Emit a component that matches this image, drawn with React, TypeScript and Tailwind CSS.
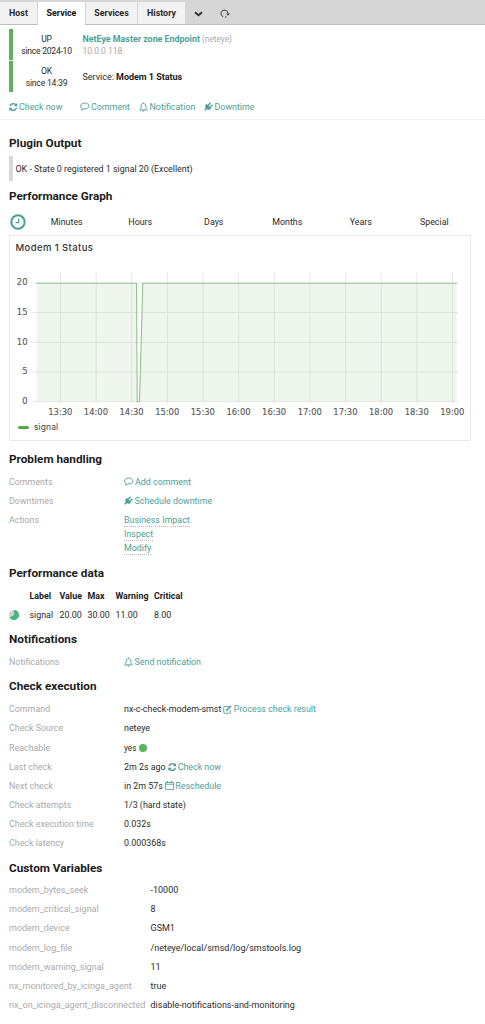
import type { ReactNode } from "react";

const Refresh = () => (
  <svg className="h-[8px] w-[8.5px] shrink-0" viewBox="0 0 1536 1536" fill="currentColor">
    <path d="M1511 928q0 5-1 7-64 268-268 434.5t-478 166.5q-146 0-282.5-55t-243.5-157l-129 129q-19 19-45 19t-45-19-19-45v-448q0-26 19-45t45-19h448q26 0 45 19t19 45-19 45l-137 137q71 66 161 102t187 36q134 0 250-65t186-179q11-17 53-117 8-23 30-23h192q13 0 22.5 9.5t9.5 22.5zm25-800v448q0 26-19 45t-45 19h-448q-26 0-45-19t-19-45 19-45l138-138q-148-137-349-137-134 0-250 65t-186 179q-11 17-53 117-8 23-30 23h-199q-13 0-22.5-9.5t-9.5-22.5v-7q65-268 270-434.5t480-166.5q146 0 284 55.5t245 156.5l130-129q19-19 45-19t45 19 19 45z" />
  </svg>
);

const Comment = () => (
  <svg className="h-[9px] w-[9.5px]" viewBox="0 0 19 18" fill="none" stroke="currentColor" strokeWidth="1.8" strokeLinejoin="round">
    <path d="M9.5 2C5 2 1.2 4.6 1.2 8c0 2 1.2 3.7 3.2 4.8C4.2 14 3.6 15 2.6 16c2.2-.2 4-1 5.2-2.2C14 14.3 17.8 11.6 17.8 8S14 2 9.5 2Z" />
  </svg>
);

const Bell = () => (
  <svg className="h-[10px] w-[9px]" viewBox="0 0 18 20" fill="none" stroke="currentColor" strokeWidth="1.8" strokeLinejoin="round">
    <path d="M9 1v2M9 3C6 3 4.4 5.2 4.4 8c0 4-1 6-3.2 7.8h15.6C14.6 14 13.6 12 13.6 8c0-2.8-1.6-5-4.6-5ZM7.3 16.3c0 2.8 3.4 2.8 3.4 0" />
  </svg>
);

const Plug = () => (
  <svg className="h-[9px] w-[9px]" viewBox="0 0 18 18" fill="currentColor">
    <path d="M5 3.5 14.5 13c-2.5 2.6-5.8 2.9-8.5 1.5L2.5 17.5.5 15.5l2.8-3.2C2 9.6 2.5 6.3 5 3.5Z" />
    <path d="m9 6 3.5-3.500M12.500 9.800l3.500-3.500" stroke="currentColor" strokeWidth="2.9" strokeLinecap="round" />
  </svg>
);

const Edit = () => (
  <svg className="h-[9px] w-[9px]" viewBox="0 0 18 18" fill="none" stroke="currentColor" strokeWidth="1.8">
    <path d="M12 3H3.500Q1.500 3 1.500 5v9.500q0 2 2 2H13q2 0 2-2V11" />
    <path d="m7.500 10.500 8.500-8.500" strokeWidth="3.4" />
    <path d="m5.500 12.700.7-3.500 2.700 2.700Z" fill="currentColor" stroke="none" />
  </svg>
);

const Calendar = () => (
  <svg className="h-[9px] w-[9px]" viewBox="0 0 18 18" fill="none" stroke="currentColor" strokeWidth="1.6">
    <path d="M1 3h16v14H1ZM1 6.500h16" />
    <path d="M5 0v4M13 0v4" strokeWidth="2.5" />
  </svg>
);

const Clock = () => (
  <svg className="h-4 w-4" viewBox="0 0 16 16" fill="none" stroke="currentColor">
    <circle cx="8" cy="8" r="6.7" strokeWidth="2" />
    <path d="M8.700 4.500v4.100H5.500" strokeWidth="1.2" />
  </svg>
);

const Link = ({ icon, children }: { icon: ReactNode; children: ReactNode }) => (
  <a className="inline-flex items-center gap-[1.5px] text-[#4a9f99]">
    {icon}
    <span>{children}</span>
  </a>
);

const Heading = ({ children }: { children: ReactNode }) => (
  <h2 className="flex h-[18px] items-center text-[11.75px] font-bold text-[#1c1c1c]">{children}</h2>
);

const Row = ({ label, children }: { label: string; children: ReactNode }) => (
  <div className="flex h-[19.1px] items-center">
    <div className="w-[115px] text-[#aaa]">{label}</div>
    <div className="flex items-center gap-[2px]">{children}</div>
  </div>
);

const hours = ["13:30", "14:00", "14:30", "15:00", "15:30", "16:00", "16:30", "17:00", "17:30", "18:00", "18:30", "19:00"];

const variables = [
  ["modem_bytes_seek", "-10000"],
  ["modem_critical_signal", "8"],
  ["modem_device", "GSM1"],
  ["modem_log_file", "/neteye/local/smsd/log/smstools.log"],
  ["modem_warning_signal", "11"],
  ["nx_monitored_by_icinga_agent", "true"],
  ["nx_on_icinga_agent_disconnected", "disable-notifications-and-monitoring"],
];

const Chart = () => (
  <svg className="block h-[164px] w-[460px]" viewBox="10 256 460 164">
    <g stroke="#ebebec" strokeWidth="1">
      {[283, 312.5, 342.5, 372, 401.5].map((y) => (
        <path key={y} d={`M31 ${y}H458.5`} />
      ))}
      {hours.map((h, i) => (
        <path key={h} d={`M${60.5 + i * 35.64} 271.5V404`} />
      ))}
    </g>
    <path d="M36.500 283.300H136.500L137.200 401.500H139.500L142.800 283.300H456.800V401.500H36.500Z" fill="#56a64b" fillOpacity=".1" />
    <path d="M36.500 283.300H136.500L137.200 401.500H139.500L142.800 283.300H456.800" fill="none" stroke="#8fc588" strokeWidth="1.1" />
    <g fill="#5b5c60" stroke="#5b5c60" strokeWidth=".15" fontSize="8.4" fontFamily="DejaVu Sans, sans-serif">
      {[20, 15, 10, 5, 0].map((v, i) => (
        <text key={v} x="27.5" y={285.3 + i * 29.6} textAnchor="end">{v}</text>
      ))}
      {hours.map((h, i) => (
        <text key={h} x={60.3 + i * 35.64} y="414.5" textAnchor="middle">{h}</text>
      ))}
    </g>
  </svg>
);

const App = () => {
  return (
    <div className="h-[1024px] w-full overflow-hidden bg-white font-['Roboto',sans-serif] text-[8.9px] leading-[12px] whitespace-nowrap text-[#2b2b2b]">
      {/* tabs */}
      <nav className="flex h-[25px] items-stretch border-b border-[#bdbdbd] bg-[#d6d6d6] pt-[2px] font-bold">
        <div className="flex w-[37px] items-center justify-center bg-[#f2f2f2]">Host</div>
        <div className="ml-px -mb-px flex w-[47px] items-center justify-center bg-white pb-px text-[#111]">Service</div>
        <div className="ml-px flex w-[51px] items-center justify-center bg-[#f2f2f2]">Services</div>
        <div className="ml-px flex w-[47px] items-center justify-center bg-[#f2f2f2]">History</div>
        <svg className="mt-[9px] ml-[9px] h-[6px] w-[9px]" viewBox="0 0 9 6" fill="none" stroke="#333" strokeWidth="2">
          <path d="m1 1.200 3.500 3 3.500-3" />
        </svg>
        <svg className="mt-[7px] ml-[17px] h-[9px] w-[10px]" viewBox="0 0 10 9" fill="none" stroke="#444" strokeWidth="1">
          <path d="M3.300 7.800A3.500 3.500 0 1 1 8 4.500M5 8h1.500" />
          <path d="M6 4.500h4L8 6.800Z" fill="#444" stroke="none" />
        </svg>
      </nav>

      {/* host and service state */}
      <header className="h-[95px] border-b border-[#f0f0f0] pt-[4px] pl-[9px]">
        <div className="mb-px flex h-[31px]">
          <div className="w-[4px] bg-[#5cb35c]" />
          <div className="w-[67px] pt-[4px] text-center text-[8.6px] tracking-[-.25px]">UP<br />since 2024-10</div>
          <div className="pt-[4px] pl-[2.5px]">
            <span className="font-bold text-[#4a9f99]">NetEye Master zone Endpoint</span>
            <span className="text-[8.3px] text-[#aaa]"> (neteye)</span>
            <div className="text-[8.6px] tracking-[-.1px] text-[#aaa]">10.0.0.118</div>
          </div>
        </div>
        <div className="flex h-[31px]">
          <div className="w-[4px] bg-[#5cb35c]" />
          <div className="w-[67px] pt-[4px] text-center text-[8.6px] tracking-[-.2px]">OK<br />since 14:39</div>
          <div className="flex items-center pl-[2.5px] text-[9px] tracking-[-.02px] whitespace-pre">
            Service: <b className="text-[#1c1c1c]">Modem 1 Status</b>
          </div>
        </div>
        <div className="flex h-[26px] items-center pt-[3px]">
          <div className="flex w-[71px]"><Link icon={<Refresh />}>Check now</Link></div>
          <div className="flex w-[59px]"><Link icon={<Comment />}>Comment</Link></div>
          <div className="flex w-[65px]"><Link icon={<Bell />}>Notification</Link></div>
          <Link icon={<Plug />}>Downtime</Link>
        </div>
      </header>

      <main className="px-[9px] pt-[14px]">
        <Heading>Plugin Output</Heading>
        <div className="mt-[4px] flex h-[25px] items-center border-l-[4px] border-[#d8d8d8] pl-[2.5px]">
          OK - State 0 registered 1 signal 20 (Excellent)
        </div>
        <div className="pt-[6px]"><Heading>Performance Graph</Heading></div>

        <div className="mt-[6px] mb-[2px] flex h-[22px] items-center pl-[1px] text-[#4a9f99]">
          <Clock />
          <div className="ml-[4px] grid grid-cols-[repeat(6,73.5px)] text-center text-[#2b2b2b]">
            {["Minutes", "Hours", "Days", "Months", "Years", "Special"].map((t) => (
              <span key={t}>{t}</span>
            ))}
          </div>
        </div>

        <div className="h-[206px] w-[462px] border border-[#e9e9e9]">
          <div className="h-[20px] pt-[6px] pl-[5.5px] font-['Inter'] text-[9.5px] font-medium tracking-[.4px] text-[#333]">Modem 1 Status</div>
          <Chart />
          <div className="flex items-center pt-px pl-[8px] font-['Inter'] text-[8.5px] tracking-[.1px] text-[#444]">
            <div className="mr-[5px] h-[3px] w-[11px] rounded-full bg-[#56a64b]" />
            signal
          </div>
        </div>

        <div className="mt-[9px]"><Heading>Problem handling</Heading></div>
        <div className="mt-[4px]">
          <Row label="Comments"><Link icon={<Comment />}>Add comment</Link></Row>
          <Row label="Downtimes"><Link icon={<Plug />}>Schedule downtime</Link></Row>
          <div className="flex h-[47px] pt-[4px]">
            <div className="w-[115px] text-[#aaa]">Actions</div>
            <div className="flex flex-col items-start gap-px text-[#4a9f99]">
              {["Business Impact", "Inspect", "Modify"].map((t) => (
                <a key={t} className="h-[13px] border-b border-dotted border-[#bbb]">{t}</a>
              ))}
            </div>
          </div>
        </div>

        <div className="mt-[7px]"><Heading>Performance data</Heading></div>
        <div className="mt-[4px] grid grid-cols-[20.5px_30px_28px_28px_38.5px_40px]">
          {["", "Label", "Value", "Max", "Warning", "Critical"].map((t) => (
            <b key={t} className="flex h-[19px] items-center text-[#1c1c1c]">{t}</b>
          ))}
          <div className="flex h-[19px] items-center">
            <svg className="h-[10px] w-[10px]" viewBox="0 0 10 10">
              <circle cx="5" cy="5" r="5" fill="#ddc9de" />
              <path d="M5 5V0A5 5 0 1 1 .67 7.500Z" fill="#44bb77" />
            </svg>
          </div>
          {["signal", "20.00", "30.00", "11.00", "8.00"].map((t) => (
            <span key={t} className="flex h-[19px] items-center">{t}</span>
          ))}
        </div>

        <div className="mt-[6px]"><Heading>Notifications</Heading></div>
        <div className="mt-[4px]">
          <Row label="Notifications"><Link icon={<Bell />}>Send notification</Link></Row>
        </div>

        <div className="mt-[6px]"><Heading>Check execution</Heading></div>
        <div className="mt-[4.5px]">
          <Row label="Command">nx-c-check-modem-smst <Link icon={<Edit />}>Process check result</Link></Row>
          <Row label="Check Source">neteye</Row>
          <Row label="Reachable">
            <span className="text-[8.3px]">yes</span>
            <div className="h-[8px] w-[8px] rounded-full bg-[#5cb35c]" />
          </Row>
          <Row label="Last check">2m 2s ago <Link icon={<Refresh />}>Check now</Link></Row>
          <Row label="Next check">in 2m 57s <Link icon={<Calendar />}>Reschedule</Link></Row>
          <Row label="Check attempts">1/3 (hard state)</Row>
          <Row label="Check execution time">0.032s</Row>
          <Row label="Check latency">0.000368s</Row>
        </div>

        <div className="mt-[6px]"><Heading>Custom Variables</Heading></div>
        <div className="mt-[4px] text-[9px]">
          {variables.map(([name, value]) => (
            <div key={name} className="flex h-[19.15px] items-center">
              <div className="w-[141.5px] text-[#aaa]">{name}</div>
              <div>{value}</div>
            </div>
          ))}
        </div>
      </main>
    </div>
  );
};

export default App;
